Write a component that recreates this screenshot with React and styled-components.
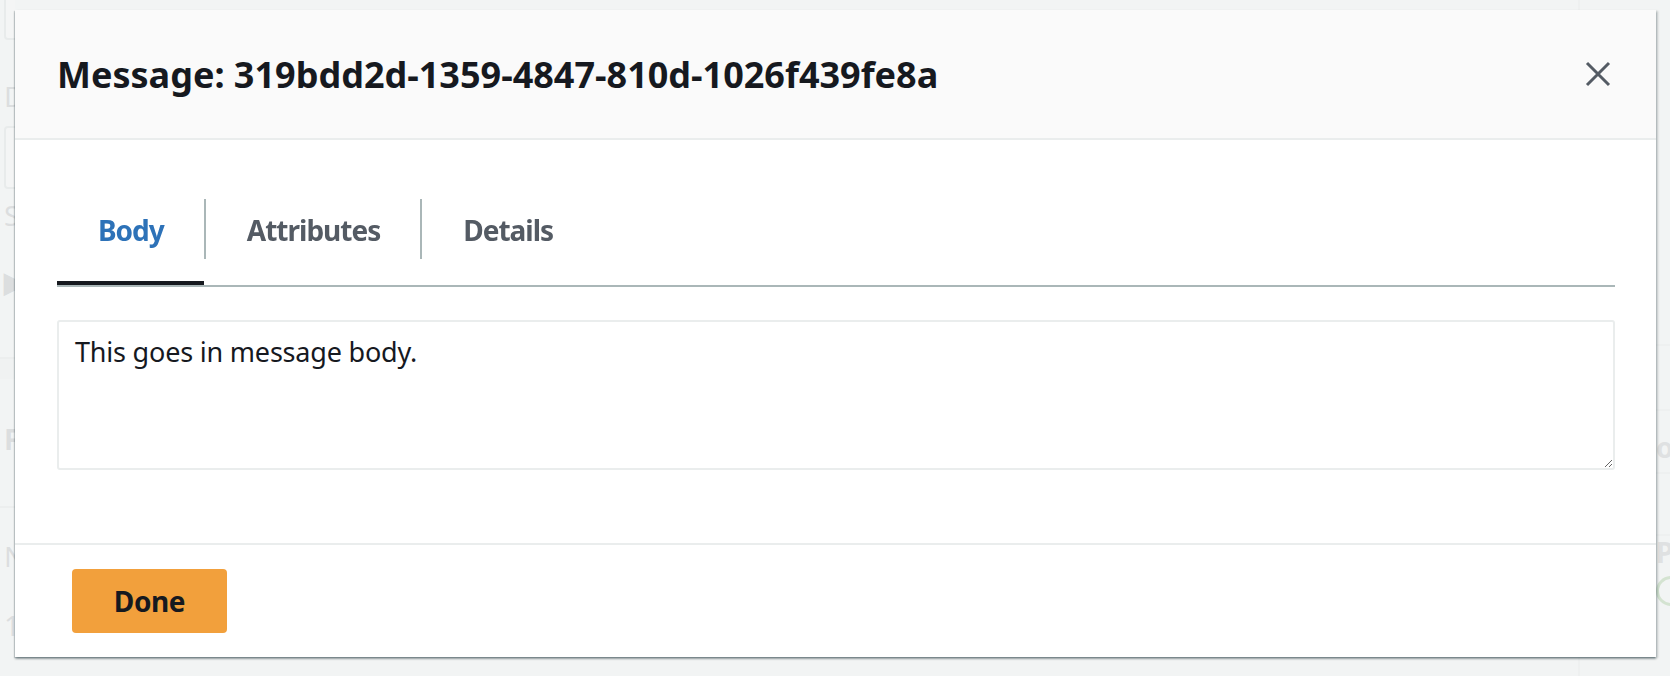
import React from 'react'
import styled, { createGlobalStyle } from 'styled-components'

const GlobalStyle = createGlobalStyle`
  html, body {
    margin: 0;
    padding: 0;
    background: #f2f3f3;
    font-family: "Noto Sans", "Open Sans", sans-serif;
    overflow: hidden;
  }
  * { box-sizing: border-box; }
`

// faded console page behind the dialog
const Backdrop = styled.div`
  display: grid;
  grid-template-columns: 1fr 92px;
  height: 676px;
  overflow: hidden;
`

const FormColumn = styled.div`
  display: flex;
  flex-direction: column;
  width: 15px;
  overflow: hidden;
  padding-left: 4px;
`

const FakeInput = styled.div`
  flex: none;
  height: ${p => p.h}px;
  margin-top: ${p => p.mt}px;
  width: 600px;
  border: 2px solid #aab7b8;
  border-radius: 4px;
  background: #fff;
`

const FakeLabel = styled.div`
  flex: none;
  margin-top: ${p => p.mt}px;
  font-size: 28px;
  font-weight: ${p => (p.bold ? 700 : 400)};
  color: #545b64;
  line-height: 32px;
  white-space: nowrap;
`

const FakeRule = styled.div`
  flex: none;
  margin-top: ${p => p.mt}px;
  margin-left: -4px;
  height: ${p => p.h}px;
  border-top: 2px solid #c4cccc;
  background: ${p => (p.h > 2 ? '#e3e6e6' : 'transparent')};
`

const SideColumn = styled.div`
  display: flex;
  flex-direction: column;
  border-left: 2px solid #d5dbdb;
  padding-top: 344px;
`

const SideRow = styled.div`
  flex: none;
  height: ${p => p.h}px;
  border-top: 2px solid #d5dbdb;
  font-size: 28px;
  font-weight: 700;
  line-height: 32px;
  color: #687078;
  padding: ${p => p.pt}px 0 0 76px;
`

const CheckCircle = styled.div`
  margin-top: 8px;
  width: 30px;
  height: 30px;
  border: 3px solid #1d8102;
  border-radius: 50%;
`

const Overlay = styled.div`
  position: fixed;
  inset: 0;
  background: rgba(242, 243, 243, 0.86);
`

const Modal = styled.div`
  position: fixed;
  top: 10px;
  left: 15px;
  width: 1641px;
  background: #fff;
  box-shadow: 0 2px 2px 0 rgba(0, 28, 36, 0.35), 2px 1px 2px 0 rgba(0, 28, 36, 0.18),
    -1px 1px 1px 0 rgba(0, 28, 36, 0.15);
  display: flex;
  flex-direction: column;
`

const Header = styled.div`
  display: flex;
  align-items: center;
  justify-content: space-between;
  height: 130px;
  padding: 0 45px 0 42px;
  background: #fafafa;
  border-bottom: 2px solid #eaeded;
`

const Title = styled.h2`
  margin: 0;
  font-size: 36px;
  font-weight: 700;
  color: #16191f;
  letter-spacing: 0px;
`

const CloseButton = styled.button`
  border: 0;
  background: none;
  padding: 0;
  width: 26px;
  height: 26px;
  display: flex;
  cursor: pointer;
`

const Body = styled.div`
  padding: 30px 41px 73px 42px;
`

const TabList = styled.div`
  display: flex;
  border-bottom: 2px solid #aab7b8;
`

const Tab = styled.div`
  padding: 40px 40px 31px 41px;
  font-size: 28px;
  line-height: 40px;
  font-weight: 700;
  letter-spacing: -1px;
  color: ${p => (p.active ? '#2d72b8' : '#545b64')};
  border-bottom: 4px solid ${p => (p.active ? '#16191f' : 'transparent')};
  cursor: pointer;
`

const TabDivider = styled.div`
  width: 2px;
  height: 60px;
  align-self: center;
  margin-top: 3px;
  background: #aab7b8;
`

const BodyText = styled.textarea`
  display: block;
  width: 100%;
  height: 150px;
  margin-top: 33px;
  padding: 10px 16px;
  border: 2px solid #eaeded;
  border-radius: 3px;
  font-family: "Noto Sans", "Open Sans", sans-serif;
  font-size: 27px;
  line-height: 40px;
  letter-spacing: -0.2px;
  color: #16191f;
  resize: vertical;
  outline: none;
`

const Footer = styled.div`
  display: flex;
  padding: 24px 57px;
  border-top: 2px solid #eaeded;
`

const DoneButton = styled.button`
  width: 155px;
  height: 64px;
  border: 0;
  border-radius: 4px;
  background: #f2a03c;
  font-family: "Noto Sans", "Open Sans", sans-serif;
  font-size: 28px;
  font-weight: 700;
  letter-spacing: -0.4px;
  color: #16191f;
  cursor: pointer;
`

const tabs = ['Body', 'Attributes', 'Details']

export default function App() {
  return (
    <>
      <GlobalStyle />
      <Backdrop>
        <FormColumn>
          <FakeInput h={50} mt={-10} />
          <FakeLabel mt={40}>D</FakeLabel>
          <FakeInput h={63} mt={14} />
          <FakeLabel mt={10}>S</FakeLabel>
          <FakeLabel mt={34} bold>▶</FakeLabel>
          <FakeRule mt={60} h={22} />
          <FakeLabel mt={44} bold>F</FakeLabel>
          <FakeRule mt={51} h={2} />
          <FakeLabel mt={32}>N</FakeLabel>
          <FakeLabel mt={37}>1</FakeLabel>
        </FormColumn>
        <SideColumn>
          <SideRow h={65} pt={0} />
          <SideRow h={63} pt={20}>o</SideRow>
          <SideRow h={62} pt={0} />
          <SideRow h={140} pt={0}>
            P
            <CheckCircle />
          </SideRow>
        </SideColumn>
      </Backdrop>
      <Overlay />
      <Modal>
        <Header>
          <Title>Message: 319bdd2d-1359-4847-810d-1026f439fe8a</Title>
          <CloseButton aria-label="Close">
            <svg width="26" height="26" viewBox="0 0 26 26">
              <path d="M2 2 L24 24 M24 2 L2 24" stroke="#545b64" strokeWidth="3" fill="none" />
            </svg>
          </CloseButton>
        </Header>
        <Body>
          <TabList>
            {tabs.map((t, i) => (
              <React.Fragment key={t}>
                {i > 0 && <TabDivider />}
                <Tab active={i === 0}>{t}</Tab>
              </React.Fragment>
            ))}
          </TabList>
          <BodyText readOnly defaultValue="This goes in message body." />
        </Body>
        <Footer>
          <DoneButton>Done</DoneButton>
        </Footer>
      </Modal>
    </>
  )
}
